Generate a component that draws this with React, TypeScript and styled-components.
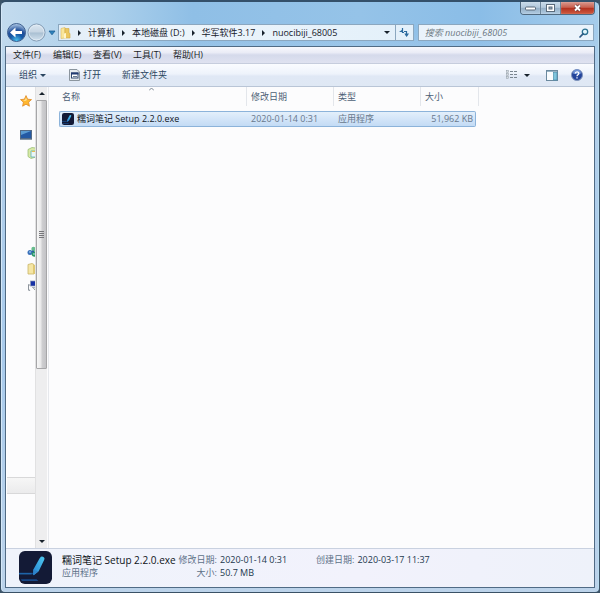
import React from "react";
import styled, { createGlobalStyle, css } from "styled-components";

const GlobalStyle = createGlobalStyle`
  *, *::before, *::after { box-sizing: border-box; }
  html, body { margin: 0; padding: 0; background: #3c5468; }
  body, button, input { font-family: "Open Sans", "Noto Sans CJK SC", sans-serif; font-size: 9px; line-height: 14px; }
  button { border: 0; padding: 0; margin: 0; background: none; color: inherit; cursor: default; }
  svg { display: block; flex: none; }
`;

const Window = styled.div`
  display: flex;
  flex-direction: column;
  min-height: 100vh;
  padding: 0 4px 4px;
  border: 1px solid #3a5166;
  border-top: 2px solid #34506a;
  border-radius: 6px 6px 5px 5px;
  box-shadow: inset 1px 0 #d5e8f8, inset -1px 0 #b9dcf0;
  background:
    linear-gradient(180deg, transparent 30px, #b4d0ea 90px, #a9cbec 60%, #bcd3ea 100%),
    linear-gradient(90deg, #c3dbee 0, #acd0eb 18%, #8fbfe6 32%, #95c3e8 60%, #8abde7 80%, #a5cceb 100%);
`;

const TitleBar = styled.header`
  display: flex;
  justify-content: flex-end;
  height: 22px;
`;

const CaptionGroup = styled.div`
  display: flex;
  height: 13px;
  border: 1px solid #50697f;
  border-top: 0;
  border-radius: 0 0 4px 4px;
  overflow: hidden;
`;

const CaptionButton = styled.button<{ $close?: boolean }>`
  display: flex;
  align-items: center;
  justify-content: center;
  width: ${(p) => (p.$close ? 33 : 20)}px;
  border-right: ${(p) => (p.$close ? "0" : "1px solid #6d869b")};
  background: ${(p) =>
    p.$close
      ? "linear-gradient(#d9998f 0, #c9604f 45%, #b2301f 50%, #ce5a40 100%)"
      : "linear-gradient(#c9dbea 0, #b3c9dc 45%, #93aec6 50%, #b2cce2 100%)"};
  box-shadow: inset 0 0 1px #ffffffb0;
`;

const NavRow = styled.nav`
  display: flex;
  align-items: center;
  height: 17px;
  padding: 0 1px 0 2px;
  margin-bottom: 5px;
`;

const RoundButton = styled.button`
  display: flex;
  flex: none;
  margin-right: 1px;
`;

const RecentButton = styled.button`
  display: flex;
  justify-content: center;
  flex: none;
  width: 10px;
  margin-right: 1px;
`;

const AddressBar = styled.div`
  display: flex;
  align-items: center;
  flex: 352 1 0;
  min-width: 0;
  height: 17px;
  padding-left: 1px;
  border: 1px solid #8ba7bf;
  background: linear-gradient(90deg, #e3eef8, #edf5fb 30%, #e3f0fa);
  color: #16202a;
`;

const Crumb = styled.button`
  white-space: nowrap;
`;

const CrumbArrow = styled.span`
  display: flex;
  justify-content: center;
  flex: none;
  width: 17px;
`;

const AddressEnd = styled.div`
  display: flex;
  align-items: center;
  align-self: stretch;
  margin-left: auto;
`;

const AddressButton = styled.button<{ $divided?: boolean }>`
  display: flex;
  align-items: center;
  justify-content: center;
  height: 15px;
  width: ${(p) => (p.$divided ? 18 : 16)}px;
  border-left: ${(p) => (p.$divided ? "1px solid #8ba7bf" : "0")};
`;

const SearchBox = styled.form`
  display: flex;
  align-items: center;
  flex: 164 1 0;
  min-width: 0;
  height: 17px;
  margin-left: 4px;
  padding: 0 4px 0 6px;
  border: 1px solid #8ba7bf;
  background: #eaf3fb;
`;

const SearchInput = styled.input`
  flex: 1;
  min-width: 0;
  height: 15px;
  padding: 0;
  border: 0;
  outline: 0;
  background: transparent;
  font-style: italic;
  &::placeholder { color: #6b7781; opacity: 1; }
`;

const Frame = styled.div`
  display: flex;
  flex-direction: column;
  flex: 1;
  border: 1px solid #506b85;
  background: #fcfcfd;
  box-shadow: inset 1px 0 #fff, inset -1px 0 #fff;
`;

const MenuBar = styled.div`
  display: flex;
  align-items: center;
  height: 17px;
  padding-left: 7px;
  background: linear-gradient(#f8f9fd 0, #eaecf6 35%, #d5daeb 50%, #dfe2f0 100%);
  border-bottom: 1px solid #c6cddd;
  color: #1b1f26;
`;

const MenuButton = styled.button`
  width: 40px;
  text-align: left;
  white-space: nowrap;
`;

const CommandBar = styled.div`
  display: flex;
  align-items: center;
  height: 23px;
  padding: 0 11px 0 13px;
  background: linear-gradient(#fafcff 0, #eef3fb 45%, #e0e8f5 55%, #dfe8f4 100%);
  border-bottom: 1px solid #b9c5d6;
  color: #2b4660;
`;

const CommandButton = styled.button<{ $gap?: number }>`
  display: flex;
  align-items: center;
  gap: 3px;
  margin-right: ${(p) => p.$gap ?? 0}px;
  white-space: nowrap;
`;

const Spacer = styled.div`
  flex: 1;
`;

const Body = styled.div`
  display: flex;
  flex: 1;
`;

const Sidebar = styled.aside`
  display: flex;
  flex-direction: column;
  flex: none;
  width: 29px;
  overflow: hidden;
  padding-top: 8px;
`;

const TreeIcon = styled.button<{ $indent: number; $gap: number }>`
  display: flex;
  flex: none;
  height: 12px;
  margin: 0 0 ${(p) => p.$gap}px ${(p) => p.$indent}px;
`;

const TreeFooter = styled.div`
  height: 17px;
  margin: 0 0 54px 1px;
  border-top: 1px solid #d8d8d9;
  border-bottom: 1px solid #d8d8d9;
  background: linear-gradient(#f6f6f6, #ebebec);
`;

const ScrollTrack = styled.div`
  display: flex;
  flex-direction: column;
  flex: none;
  width: 12px;
  border-left: 1px solid #e1e1e2;
  background: #eeeeef;
`;

const ScrollButton = styled.button`
  display: flex;
  align-items: center;
  justify-content: center;
  height: 13px;
`;

const ScrollThumb = styled.div`
  display: flex;
  align-items: center;
  justify-content: center;
  flex: 268 1 0;
  border: 1px solid #a6a6a8;
  border-radius: 1px;
  background: linear-gradient(90deg, #f7f7f7 0, #e8e8e9 45%, #cfcfd1 55%, #c3c3c6 100%);
`;

const ScrollRest = styled.div`
  flex: 167 1 0;
`;

const FilePane = styled.main`
  flex: 1;
  min-width: 0;
  margin-left: 1px;
  padding-left: 10px;
  border-left: 1px solid #e6e8ec;
`;

const FileTable = styled.table`
  width: 417px;
  table-layout: fixed;
  border-collapse: separate;
  border-spacing: 0;
`;

const Column = styled.col<{ $width: number }>`
  width: ${(p) => p.$width}px;
`;

const HeaderCell = styled.th`
  height: 24px;
  padding: 0 0 5px;
  font-weight: 400;
  text-align: left;
  color: #4d6076;
`;

const HeaderLabel = styled.div<{ $first?: boolean; $last?: boolean }>`
  position: relative;
  height: 19px;
  padding-left: ${(p) => (p.$first ? 3 : 4)}px;
  margin-right: ${(p) => (p.$last ? -3 : 0)}px;
  border-right: 1px solid #e3e6eb;
  line-height: 19px;
`;

const SortMark = styled.span`
  position: absolute;
  top: 0;
  left: 48%;
`;

const cell = css`
  height: 16px;
  border: solid #8cb3da;
  border-width: 1px 0;
  background: linear-gradient(#e3effb, #c3dbf5);
  line-height: 14px;
  white-space: nowrap;
`;

const NameCell = styled.td`
  ${cell}
  padding: 0 0 0 2px;
  border-left-width: 1px;
  border-radius: 2px 0 0 2px;
  color: #10151c;
`;

const DataCell = styled.td<{ $last?: boolean }>`
  ${cell}
  padding: 0 ${(p) => (p.$last ? 2 : 0)}px 0 4px;
  border-right-width: ${(p) => (p.$last ? 1 : 0)}px;
  border-radius: ${(p) => (p.$last ? "0 2px 2px 0" : "0")};
  text-align: ${(p) => (p.$last ? "right" : "left")};
  color: #68788c;
`;

const FileName = styled.span`
  display: flex;
  align-items: center;
  gap: 3px;
`;

const Details = styled.footer`
  display: flex;
  align-items: flex-start;
  gap: 10px;
  min-height: 39px;
  padding: 2px 13px 2px;
  border-top: 1px solid #c9d1e0;
  background: linear-gradient(90deg, #eff3fb, #f2f2fc 60%, #eef2fa);
  color: #23384d;
`;

const DetailGrid = styled.div`
  display: grid;
  grid-template-columns: auto auto auto auto auto;
  grid-auto-rows: 13px;
  align-items: center;
  column-gap: 3px;
  padding-top: 2px;
  white-space: nowrap;
`;

const DetailName = styled.strong`
  font-size: 10px;
  font-weight: 400;
  color: #0d1218;
`;

const DetailLabel = styled.span<{ $right?: boolean; $spaced?: boolean }>`
  color: #5d7188;
  text-align: ${(p) => (p.$right ? "right" : "left")};
  margin-left: ${(p) => (p.$spaced ? 26 : 0)}px;
`;

const Triangle = ({ dir = "down", color = "#18222c" }: { dir?: "down" | "right" | "up"; color?: string }) => {
  const points = { down: "0,1 6,1 3,4", right: "1,0 4,3 1,6", up: "0,4 6,4 3,1" }[dir];
  const [w, h] = dir === "right" ? [5, 6] : [6, 5];
  return (
    <svg width={w} height={h} aria-hidden="true">
      <polygon points={points} fill={color} />
    </svg>
  );
};

const RecentArrow = () => (
  <svg width="8" height="6" aria-hidden="true">
    <path d="M1 1H7L4 4.800Z" fill="#2d83bd" stroke="#1f5f94" strokeWidth="0.800" />
  </svg>
);

const BackIcon = () => (
  <svg width="19" height="19" viewBox="0 0 19 19">
    <defs>
      <radialGradient id="back" cx="50%" cy="95%" r="90%">
        <stop offset="0" stopColor="#48c1ee" />
        <stop offset="0.4" stopColor="#155aa8" />
        <stop offset="0.65" stopColor="#22509a" />
        <stop offset="1" stopColor="#a3bfe0" />
      </radialGradient>
    </defs>
    <circle cx="9.5" cy="9.5" r="9" fill="url(#back)" stroke="#3f6090" />
    <path d="M3 9.500 8.500 4.500V8H15V11H8.500V14.500Z" fill="#fff" />
  </svg>
);

const ForwardIcon = () => (
  <svg width="19" height="19" viewBox="0 0 19 19">
    <defs>
      <linearGradient id="forward" x2="0" y2="1">
        <stop offset="0" stopColor="#dce8f2" />
        <stop offset="0.48" stopColor="#c5d4e2" />
        <stop offset="0.52" stopColor="#a9bfd2" />
        <stop offset="1" stopColor="#d4e3ef" />
      </linearGradient>
    </defs>
    <circle cx="9.5" cy="9.5" r="8.5" fill="url(#forward)" stroke="#7f97b0" />
    <circle cx="9.5" cy="9.5" r="7.5" fill="none" stroke="#e6eff7" strokeWidth="0.7" />
  </svg>
);

const FolderIcon = () => (
  <svg width="11" height="12" viewBox="0 0 11 12">
    <path d="M1 1.500 5 .500V11L1 11.500Z" fill="#f9e69b" stroke="#dfba55" strokeWidth=".6" />
    <path d="M5 1.500H9V6L10 6.500V11H5Z" fill="#ebc75e" stroke="#d2a942" strokeWidth=".6" />
    <path d="M4 6.500 6 6V11.500L4 11Z" fill="#fff6cc" />
  </svg>
);

const RefreshIcon = () => (
  <svg width="12" height="11" viewBox="0 0 12 11" fill="none" stroke="#2a6a9e">
    <path d="M4.500 1V5.500H6" strokeWidth="1.200" />
    <path d="M1 5H4.500V2.500Z" fill="#2a6a9e" stroke="none" />
    <path d="M6 4.500H8.500V9" strokeWidth="1.200" />
    <path d="M6.300 6.500H11L8.600 10Z" fill="#2a6a9e" stroke="none" />
  </svg>
);

const SearchIcon = () => (
  <svg width="10" height="10" viewBox="0 0 10 10" fill="none">
    <circle cx="6" cy="3.800" r="2.700" stroke="#2a7191" strokeWidth="1.300" fill="#e2f5fb" />
    <path d="M4 5.800 1 9" stroke="#2d5a84" strokeWidth="1.700" strokeLinecap="round" />
  </svg>
);

const AppWindowIcon = () => (
  <svg width="11" height="12" viewBox="0 0 11 12">
    <path d="M.5.500H8L10.500 3V11.500H.500Z" fill="#e8ebee" stroke="#8b959e" />
    <rect x="2.500" y="4" width="6.500" height="5" fill="#fff" stroke="#344a70" />
    <rect x="2" y="3.500" width="7.500" height="2" fill="#233b72" />
    <path d="M4 7.500H8" stroke="#68798e" />
  </svg>
);

const ViewIcon = () => (
  <svg width="12" height="10" viewBox="0 0 12 10">
    {[0, 3, 6].map((y) => (
      <g key={y}>
        <rect x="0.500" y={y + 0.5} width="2" height="2" fill="#d5dbe0" stroke="#8f9aa3" strokeWidth=".5" />
        <path d={`M4 ${y + 1.5}H7M8 ${y + 1.5}H11`} stroke="#7b8690" />
      </g>
    ))}
  </svg>
);

const PaneIcon = () => (
  <svg width="12" height="11" viewBox="0 0 12 11">
    <rect x=".5" y=".5" width="11" height="10" fill="#f8fbfd" stroke="#6b899e" />
    <path d="M1 1.500H11" stroke="#97b3c5" />
    <rect x="7.500" y="2.500" width="3.500" height="7.500" fill="#7ec4dc" stroke="#4b90ae" strokeWidth=".7" />
  </svg>
);

const HelpIcon = () => (
  <svg width="12" height="12" viewBox="0 0 12 12">
    <circle cx="6" cy="6" r="5.500" fill="#24449a" stroke="#8195bb" />
    <path d="M2 4.500A4 4 0 0 1 10 4.500Q6 6 2 4.500Z" fill="#6f92d4" />
    <path d="M4.300 4.600C4.300 2.200 7.800 2.300 7.800 4.400 7.800 5.800 6 5.800 6 7.200M6 8.300V9.600" fill="none" stroke="#fff" strokeWidth="1.300" />
  </svg>
);

const StarIcon = () => (
  <svg width="12" height="12" viewBox="0 0 12 12">
    <path d="M6 .6 7.600 4.200 11.500 4.600 8.600 7.200 9.400 11.200 6 9.200 2.600 11.200 3.400 7.200.500 4.600 4.400 4.200Z" fill="#ffb72f" stroke="#df8a27" strokeWidth=".8" />
    <path d="M6 2.500 7 5 5 6 3 5.200 5 5Z" fill="#ffe39a" />
  </svg>
);

const MonitorIcon = () => (
  <svg width="12" height="12" viewBox="0 0 12 12">
    <rect x=".5" y="1.500" width="11" height="8" fill="#2459a3" stroke="#556b85" />
    <path d="M1 2H11L1 6Z" fill="#5b9bd2" />
    <path d="M0 10.500H12" stroke="#8796a5" />
  </svg>
);

const DriveIcon = () => (
  <svg width="12" height="12" viewBox="0 0 12 12">
    <path d="M1 2.500 5 .500 9 1V10L4 11.500 1 9.500Z" fill="#d8e9a7" stroke="#91b96b" strokeWidth=".7" />
    <path d="M4 4H10V10H4Z" fill="#e9f7f8" stroke="#60afb5" strokeWidth=".8" />
    <path d="M5 4.500H9" stroke="#e8bd52" />
  </svg>
);

const NetworkIcon = () => (
  <svg width="12" height="12" viewBox="0 0 12 12">
    <circle cx="3" cy="6.500" r="2.500" fill="#3a70bb" />
    <circle cx="6.500" cy="3" r="2.200" fill="#68bd8e" />
    <circle cx="7.500" cy="8" r="2.800" fill="#2f9a65" />
    <path d="M2 6H4M6 8H9" stroke="#b6dff1" />
    <circle cx="6" cy="5.500" r="1" fill="#2452a0" />
  </svg>
);

const SmallFolderIcon = () => (
  <svg width="12" height="12" viewBox="0 0 12 12">
    <path d="M1 1.500 5 .500 7 1.500V11H1Z" fill="#f5e6a5" stroke="#c9b568" strokeWidth=".8" />
    <path d="M6 2H11V11H6Z" fill="#dfc873" />
  </svg>
);

const ComputersIcon = () => (
  <svg width="12" height="12" viewBox="0 0 12 12">
    <rect x="3.500" y="1" width="6" height="5" fill="#1731a6" stroke="#8c98b4" strokeWidth=".7" />
    <path d="M1.500 4.500V10.500M1 5H3M1.500 9 3 11M6 7.500 8 10" stroke="#8d949c" />
    <path d="M5 7.500H9" stroke="#abb3bd" />
  </svg>
);

const AppIcon = ({ size }: { size: number }) => (
  <svg width={size} height={size} viewBox="0 0 34 34" role="img" aria-label="糯词笔记">
    <defs>
      <linearGradient id={`pen${size}`} x1="1" y1="0" x2="0" y2="1">
        <stop offset="0" stopColor="#4fc9ef" />
        <stop offset="1" stopColor="#2584d2" />
      </linearGradient>
    </defs>
    <rect width="34" height="34" rx="6" fill="#131a36" />
    <path d="M0 22.500H14L16 24H0ZM2 29H18L20 31H3Z" fill="#164787" />
    <path d="M0 23.500H13" stroke="#2372b8" />
    <path d="M21 8 22.500 6Q24 5 25.500 6.500Q26.800 7.300 26 9L20.300 20.800 15 25 14.500 24 14.800 19Z" fill={`url(#pen${size})`} />
    <path d="M14.800 19 20 21 15 25Z" fill="#2f83cb" />
  </svg>
);

const menus = ["文件(F)", "编辑(E)", "查看(V)", "工具(T)", "帮助(H)"];
const crumbs = ["计算机", "本地磁盘 (D:)", "华军软件3.17", "nuocibiji_68005"];
const headers = ["名称", "修改日期", "类型", "大小"];
const widths = [188, 87, 87, 55];

const treeItems = [
  { label: "收藏夹", indent: 14, gap: 22, Icon: StarIcon },
  { label: "计算机", indent: 14, gap: 6, Icon: MonitorIcon },
  { label: "磁盘", indent: 21, gap: 87, Icon: DriveIcon },
  { label: "网络", indent: 21, gap: 5, Icon: NetworkIcon },
  { label: "文件夹", indent: 21, gap: 5, Icon: SmallFolderIcon },
  { label: "网络计算机", indent: 21, gap: 0, Icon: ComputersIcon },
];

export default function App() {
  return (
    <>
      <GlobalStyle />
      <Window>
        <TitleBar>
          <CaptionGroup>
            <CaptionButton aria-label="最小化">
              <svg width="11" height="5"><rect x=".5" y="1" width="10" height="3" rx="1" fill="#fff" stroke="#5b6b7b" /></svg>
            </CaptionButton>
            <CaptionButton aria-label="最大化">
              <svg width="9" height="8"><rect x=".5" y=".5" width="8" height="7" fill="#fff" stroke="#5b6b7b" /><rect x="3" y="3" width="3" height="2" fill="#9fb3c5" stroke="#5b6b7b" /></svg>
            </CaptionButton>
            <CaptionButton $close aria-label="关闭">
              <svg width="9" height="8"><path d="M2 1.500 7 6.500M7 1.500 2 6.500" stroke="#6d3a3a" strokeWidth="3.200" /><path d="M2 1.500 7 6.500M7 1.500 2 6.500" stroke="#fff" strokeWidth="1.900" /></svg>
            </CaptionButton>
          </CaptionGroup>
        </TitleBar>

        <NavRow>
          <RoundButton aria-label="后退"><BackIcon /></RoundButton>
          <RoundButton aria-label="前进"><ForwardIcon /></RoundButton>
          <RecentButton aria-label="最近浏览的位置"><RecentArrow /></RecentButton>
          <AddressBar>
            <FolderIcon />
            {crumbs.map((name) => (
              <React.Fragment key={name}>
                <CrumbArrow><Triangle dir="right" /></CrumbArrow>
                <Crumb>{name}</Crumb>
              </React.Fragment>
            ))}
            <AddressEnd>
              <AddressButton aria-label="以前的位置"><Triangle /></AddressButton>
              <AddressButton $divided aria-label="刷新"><RefreshIcon /></AddressButton>
            </AddressEnd>
          </AddressBar>
          <SearchBox role="search">
            <SearchInput type="text" aria-label="搜索" placeholder="搜索 nuocibiji_68005" />
            <SearchIcon />
          </SearchBox>
        </NavRow>

        <Frame>
          <MenuBar>
            {menus.map((m) => <MenuButton key={m}>{m}</MenuButton>)}
          </MenuBar>
          <CommandBar>
            <CommandButton $gap={23}>组织<Triangle color="#2b4660" /></CommandButton>
            <CommandButton $gap={21}><AppWindowIcon />打开</CommandButton>
            <CommandButton>新建文件夹</CommandButton>
            <Spacer />
            <CommandButton $gap={6} aria-label="视图"><ViewIcon /></CommandButton>
            <CommandButton $gap={16} aria-label="更多选项"><Triangle /></CommandButton>
            <CommandButton $gap={13} aria-label="预览窗格"><PaneIcon /></CommandButton>
            <CommandButton aria-label="帮助"><HelpIcon /></CommandButton>
          </CommandBar>

          <Body>
            <Sidebar>
              {treeItems.map(({ label, indent, gap, Icon }) => (
                <TreeIcon key={label} aria-label={label} $indent={indent} $gap={gap}><Icon /></TreeIcon>
              ))}
              <Spacer />
              <TreeFooter />
            </Sidebar>
            <ScrollTrack>
              <ScrollButton aria-label="向上滚动"><Triangle dir="up" /></ScrollButton>
              <ScrollThumb>
                <svg width="5" height="7"><path d="M0 .5H5M0 2.500H5M0 4.500H5M0 6.500H5" stroke="#77777b" /></svg>
              </ScrollThumb>
              <ScrollRest />
              <ScrollButton aria-label="向下滚动"><Triangle /></ScrollButton>
            </ScrollTrack>
            <FilePane>
              <FileTable>
                <colgroup>
                  {widths.map((w, i) => <Column key={i} $width={w} />)}
                </colgroup>
                <thead>
                  <tr>
                    {headers.map((h, i) => (
                      <HeaderCell key={h} scope="col">
                        <HeaderLabel $first={i === 0} $last={i === 3}>
                          {h}
                          {i === 0 && <SortMark><svg width="5" height="4"><path d="M0 3.500 2.500 1 5 3.500" fill="none" stroke="#7b8793" /></svg></SortMark>}
                        </HeaderLabel>
                      </HeaderCell>
                    ))}
                  </tr>
                </thead>
                <tbody>
                  <tr aria-selected="true">
                    <NameCell><FileName><AppIcon size={12} />糯词笔记 Setup 2.2.0.exe</FileName></NameCell>
                    <DataCell>2020-01-14 0:31</DataCell>
                    <DataCell>应用程序</DataCell>
                    <DataCell $last>51,962 KB</DataCell>
                  </tr>
                </tbody>
              </FileTable>
            </FilePane>
          </Body>

          <Details>
            <AppIcon size={33} />
            <DetailGrid>
              <DetailName>糯词笔记 Setup 2.2.0.exe</DetailName>
              <DetailLabel>修改日期:</DetailLabel>
              <span>2020-01-14 0:31</span>
              <DetailLabel $spaced>创建日期:</DetailLabel>
              <span>2020-03-17 11:37</span>
              <DetailLabel>应用程序</DetailLabel>
              <DetailLabel $right>大小:</DetailLabel>
              <span>50.7 MB</span>
            </DetailGrid>
          </Details>
        </Frame>
      </Window>
    </>
  );
}
